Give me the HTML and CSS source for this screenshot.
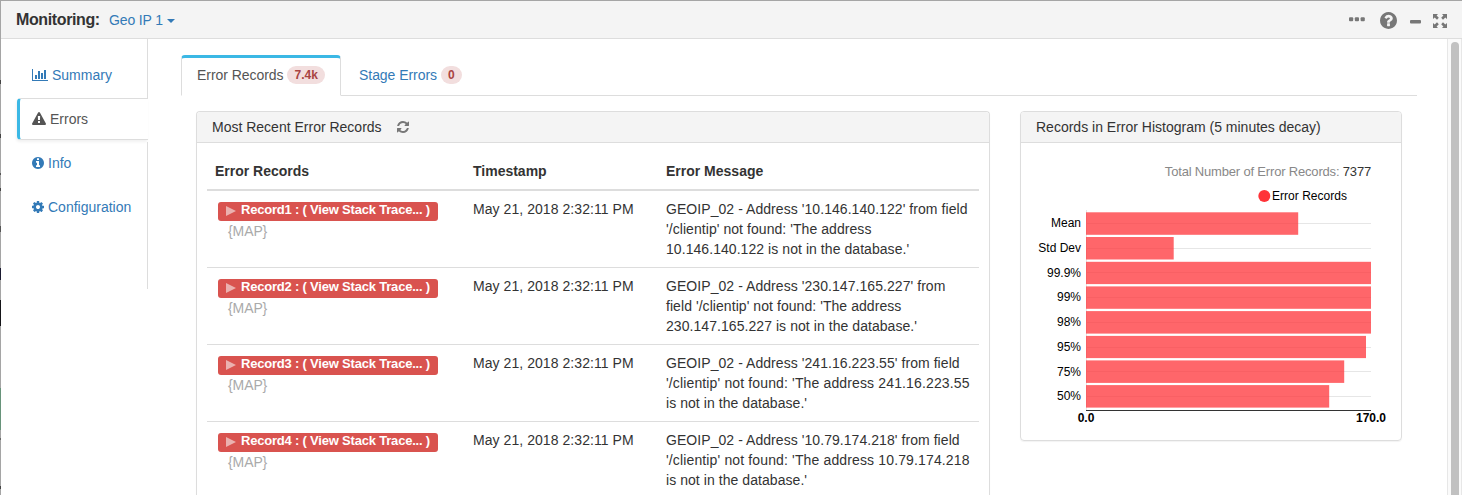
FILE: index.html
```html
<!DOCTYPE html>
<html lang="en">
<head>
<meta charset="utf-8">
<title>Monitoring</title>
<link rel="stylesheet" href="styles.css">
</head>
<body>
<div class="window">
  <header class="topbar">
    <span class="topbar-title">Monitoring:</span>
    <a class="pipeline">Geo IP 1</a><span class="caret"></span>
    <div class="tools">
      <svg class="t-dots" width="16" height="5" viewBox="0 0 16 5"><rect x="0" y="0.3" width="4.2" height="4" rx="1"/><rect x="5.8" y="0.3" width="4.2" height="4" rx="1"/><rect x="11.6" y="0.3" width="4.2" height="4" rx="1"/></svg>
      <svg class="t-help" width="17" height="17" viewBox="128 128 1536 1536"><path d="M1024 1376v-192q0-14-9-23t-23-9h-192q-14 0-23 9t-9 23v192q0 14 9 23t23 9h192q14 0 23-9t9-23zm256-672q0-88-55.500-163t-138.500-116-170-41q-243 0-371 213-15 24 8 42l132 100q7 6 19 6 16 0 25-12 53-68 86-92 34-24 86-24 48 0 85.500 26t37.500 59q0 38-20 61t-68 45q-63 28-115.500 86.500t-52.500 125.500v36q0 14 9 23t23 9h192q14 0 23-9t9-23q0-19 21.500-49.500t54.500-49.500q32-18 49-28.500t46-35 44.500-48 28-60.500 12.500-81zm384 192q0 209-103 385.500t-279.500 279.500-385.500 103-385.500-103-279.500-279.500-103-385.500 103-385.500 279.500-279.500 385.500-103 385.500 103 279.500 279.500 103 385.500z"/></svg>
      <svg class="t-min" width="11" height="4" viewBox="0 0 11 4"><rect width="11" height="3.600" rx="1"/></svg>
      <svg class="t-full" width="14" height="14" viewBox="0 0 14 14"><path id="arr" d="M0 0h5L3.600 1.500 5.800 3.800 4 5.700 1.700 3.500 0 5z"/><use href="#arr" transform="translate(14 0) scale(-1 1)"/><use href="#arr" transform="translate(0 14) scale(1 -1)"/><use href="#arr" transform="translate(14 14) scale(-1 -1)"/></svg>
    </div>
  </header>
  <div class="body">
    <nav class="side">
      <a class="side-item"><svg width="16" height="14" viewBox="0 0 2048 1792"><path d="M640 896v512H384V896h256zm384-512v1024H768V384h256zM2048 1536v128H0V128h128v1408h1920zM1408 640v768h-256V640h256zm384-384v1152h-256V256h256z"/></svg>Summary</a>
      <a class="side-item active"><svg width="14" height="14" viewBox="0 0 1792 1792"><path d="M1024 1375v-190q0-14-9.500-23.500t-22.500-9.500h-192q-13 0-22.500 9.500t-9.500 23.500v190q0 14 9.500 23.500t22.500 9.500h192q13 0 22.500-9.500t9.500-23.500zm-2-374l18-459q0-12-10-19-13-11-24-11h-220q-11 0-24 11-10 7-10 21l17 457q0 10 10 16.500t24 6.500h185q14 0 23.500-6.500t10.500-16.500zm-14-934l768 1408q35 63-2 126-17 29-46.500 46t-63.500 17h-1536q-34 0-63.500-17t-46.500-46q-37-63-2-126l768-1408q17-31 47-49t65-18 65 18 47 49z"/></svg>Errors</a>
      <a class="side-item"><svg width="12" height="14" viewBox="128 0 1536 1792"><path d="M1152 1376v-160q0-14-9-23t-23-9h-96v-512q0-14-9-23t-23-9h-320q-14 0-23 9t-9 23v160q0 14 9 23t23 9h96v320h-96q-14 0-23 9t-9 23v160q0 14 9 23t23 9h448q14 0 23-9t9-23zm-128-896v-160q0-14-9-23t-23-9h-192q-14 0-23 9t-9 23v160q0 14 9 23t23 9h192q14 0 23-9t9-23zm640 416q0 209-103 385.500t-279.500 279.500-385.500 103-385.500-103-279.500-279.500-103-385.500 103-385.500 279.500-279.500 385.500-103 385.500 103 279.500 279.500 103 385.500z"/></svg>Info</a>
      <a class="side-item"><svg width="12" height="14" viewBox="128 0 1536 1792"><path d="M1152 896q0-106-75-181t-181-75-181 75-75 181 75 181 181 75 181-75 75-181zm512-109v222q0 12-8 23t-20 13l-185 28q-19 54-39 91 35 50 107 138 10 12 10 25t-9 23q-27 37-99 108t-94 71q-12 0-26-9l-138-108q-44 23-91 38-16 136-29 186-7 28-36 28h-222q-14 0-24.500-8.500t-11.500-21.500l-28-184q-49-16-90-37l-141 107q-10 9-25 9-14 0-25-11-126-114-165-168-7-10-7-23 0-12 8-23 15-21 51-66.500t54-70.500q-27-50-41-99l-183-27q-13-2-21-12.500t-8-23.500v-222q0-12 8-23t19-13l186-28q14-46 39-92-40-57-107-138-10-12-10-24 0-10 9-23 26-36 98.500-107.500t94.500-71.500q13 0 26 10l138 107q44-23 91-38 16-136 29-186 7-28 36-28h222q14 0 24.500 8.500t11.500 21.500l28 184q49 16 90 37l142-107q9-9 24-9 13 0 25 10 129 119 165 170 7 8 7 22 0 12-8 23-15 21-51 66.500t-54 70.500q26 50 41 98l183 28q13 2 21 12.500t8 23.500z"/></svg>Configuration</a>
      <div class="side-rest"></div>
    </nav>
    <main class="main">
      <div class="tabs">
        <a class="tab active">Error Records <span class="badge">7.4k</span></a>
        <a class="tab">Stage Errors <span class="badge">0</span></a>
      </div>
      <div class="panels">
        <section class="panel records">
          <h2 class="panel-head">Most Recent Error Records<svg class="refresh" width="12" height="14" viewBox="128 0 1536 1792"><path d="M1639 1056q0 5-1 7-64 268-268 434.500t-478 166.500q-146 0-282.500-55t-243.500-157l-129 129q-19 19-45 19t-45-19-19-45v-448q0-26 19-45t45-19h448q26 0 45 19t19 45-19 45l-137 137q71 66 161 102t187 36q134 0 250-65t186-179q11-17 53-117 8-23 30-23h192q13 0 22.500 9.500t9.500 22.500zm25-800v448q0 26-19 45t-45 19h-448q-26 0-45-19t-19-45 19-45l138-138q-148-137-349-137-134 0-250 65t-186 179q-11 17-53 117-8 23-30 23h-199q-13 0-22.500-9.500t-9.500-22.500v-7q65-268 270-434.500t480-166.500q146 0 284 55.500t245 156.500l130-129q19-19 45-19t45 19 19 45z"/></svg></h2>
          <table class="table">
            <thead><tr><th class="c1">Error Records</th><th class="c2">Timestamp</th><th>Error Message</th></tr></thead>
            <tbody>
              <tr><td><span class="label"><i class="play"></i><span>Record1 : ( View Stack Trace... )</span></span><div class="map">{MAP}</div></td><td>May 21, 2018 2:32:11 PM</td><td>GEOIP_02 - Address '10.146.140.122' from field<br>'/clientip' not found: 'The address<br>10.146.140.122 is not in the database.'</td></tr>
              <tr><td><span class="label"><i class="play"></i><span>Record2 : ( View Stack Trace... )</span></span><div class="map">{MAP}</div></td><td>May 21, 2018 2:32:11 PM</td><td>GEOIP_02 - Address '230.147.165.227' from<br>field '/clientip' not found: 'The address<br>230.147.165.227 is not in the database.'</td></tr>
              <tr><td><span class="label"><i class="play"></i><span>Record3 : ( View Stack Trace... )</span></span><div class="map">{MAP}</div></td><td>May 21, 2018 2:32:11 PM</td><td>GEOIP_02 - Address '241.16.223.55' from field<br><span class="loose">'/clientip' not found: 'The address 241.16.223.55</span><br>is not in the database.'</td></tr>
              <tr><td><span class="label"><i class="play"></i><span>Record4 : ( View Stack Trace... )</span></span><div class="map">{MAP}</div></td><td>May 21, 2018 2:32:11 PM</td><td>GEOIP_02 - Address '10.79.174.218' from field<br><span class="loose">'/clientip' not found: 'The address 10.79.174.218</span><br>is not in the database.'</td></tr>
            </tbody>
          </table>
        </section>
        <section class="panel histogram">
          <h2 class="panel-head">Records in Error Histogram (5 minutes decay)</h2>
          <div class="total">Total Number of Error Records: <b>7377</b></div>
          <svg class="chart" width="380" height="255" viewBox="0 0 380 255">
            <circle cx="243.300" cy="13" r="6" fill="#ff3338"/>
            <text x="251" y="17" textLength="75">Error Records</text>
            <g transform="translate(0 -1)">
              <path class="grid" d="M65.500 28V228M65 41.500H350M65 66.500H350M65 90.500H350M65 115.500H350M65 140.500H350M65 165.500H350M65 189.500H350M65 214.500H350"/>
              <g class="bars">
                <rect x="65" y="30.300" width="212.200" height="22.500"/>
                <rect x="65" y="55" width="87.700" height="22.500"/>
                <rect x="65" y="79.800" width="285" height="22.300"/>
                <rect x="65" y="104.400" width="285" height="22.400"/>
                <rect x="65" y="129.100" width="285" height="22.500"/>
                <rect x="65" y="153.900" width="280" height="22.200"/>
                <rect x="65" y="178.400" width="258.200" height="22.500"/>
                <rect x="65" y="203.100" width="243.200" height="22.500"/>
              </g>
              <path class="axis" d="M65 228.500H350"/>
              <g class="names">
                <text x="60" y="45">Mean</text><text x="60" y="70">Std Dev</text><text x="60" y="95">99.9%</text><text x="60" y="119">99%</text><text x="60" y="144">98%</text><text x="60" y="169">95%</text><text x="60" y="194">75%</text><text x="60" y="218">50%</text>
              </g>
              <g class="ticks"><text x="65" y="240">0.0</text><text x="350" y="240">170.0</text></g>
            </g>
          </svg>
        </section>
      </div>
    </main>
    <div class="scroll"><div class="thumb"></div></div>
  </div>
</div>
</body>
</html>
```
FILE: styles.css
```css
* { box-sizing: border-box; }
body {
  margin: 0;
  height: 495px;
  overflow: hidden;
  background: linear-gradient(#a5a5a5 0 80px, #444 80px 84px, #a5a5a5 84px 134px, #444 134px 138px, #a5a5a5 138px 173px, #555 173px 175px, #a5a5a5 175px 188px, #444 188px 191px, #a5a5a5 191px 226px, #555 226px 232px, #a5a5a5 232px 268px, #1a1a30 268px 280px, #a5a5a5 280px 300px, #151518 300px 326px, #a5a5a5 326px 388px, #67937a 388px 430px, #a5a5a5 430px 438px, #666 438px 440px, #a5a5a5 440px 486px, #444 486px 489px, #a5a5a5 489px);
  color: #333;
  font: 14px/20px "Liberation Sans", Arial, sans-serif;
}
.window {
  display: flex;
  flex-direction: column;
  height: 495px;
  margin-left: 1px;
  border-top: 1px solid #a5a5a5;
  background: #fff;
}
.topbar {
  display: flex;
  flex: 0 0 38px;
  align-items: center;
  padding: 1px 15px 0 15px;
  border-bottom: 1px solid #ddd;
  background: #f4f4f4;
  white-space: nowrap;
}
.topbar-title { width: 93px; font-size: 16px; font-weight: bold; letter-spacing: -0.38px; }
.pipeline { color: #337ab7; letter-spacing: -0.15px; }
.caret { margin: 2px 0 0 4px; border: 4px solid transparent; border-top-color: #337ab7; border-bottom: 0; }
.tools { display: flex; align-items: center; margin-left: auto; fill: #777; }
.t-dots { margin: -1px 15px 0 0; }
.t-help { margin-right: 13px; }
.t-min { margin: 3px 12px 0 0; }
.t-full { margin-top: 2px; }
.body { display: flex; flex: 1; min-height: 0; }
.side {
  display: flex;
  flex-direction: column;
  flex: 0 0 147px;
  height: 250px;
  padding-left: 15px;
}
.side::before { content: ""; flex: 0 0 15px; border-right: 1px solid #ddd; }
.side-item {
  display: flex;
  align-items: center;
  flex: 0 0 44px;
  gap: 4px;
  padding: 0 0 2px 16px;
  border-right: 1px solid #ddd;
  color: #337ab7;
  fill: #337ab7;
}
.side-item.active {
  flex-basis: 42px;
  margin: 0 0 2px 1px;
  padding: 0 0 0 12px;
  border: 1px solid #ddd;
  border-right: 0;
  border-left: 3px solid #3bb8e5;
  border-radius: 4px 0 0 4px;
  box-shadow: -1px 2px 3px rgba(0, 0, 0, .06);
  color: #555;
  fill: #555;
}
.side-rest { flex: 1; border-right: 1px solid #ddd; }
.main { flex: 1; min-width: 0; padding: 16px 30px 0 33px; overflow: hidden; }
.tabs { display: flex; height: 41px; border-bottom: 1px solid #ddd; }
.tab {
  display: flex;
  align-items: center;
  gap: 4px;
  height: 41px;
  margin-right: 2px;
  padding: 0 15px 3px;
  border: 1px solid transparent;
  border-top-width: 3px;
  color: #337ab7;
  white-space: nowrap;
  letter-spacing: -0.05px;
}
.tab.active {
  width: 160px;
  border-color: #3bb8e5 #ddd #fff;
  border-radius: 4px 4px 0 0;
  background: #fff;
  color: #555;
}
.badge {
  height: 18px;
  padding: 3px 7px;
  border-radius: 9px;
  background: #f2dede;
  color: #a94442;
  font-size: 12px;
  font-weight: bold;
  line-height: 12px;
  letter-spacing: 0;
}
.panels { display: flex; align-items: flex-start; gap: 30px; padding: 15px 15px 0; }
.panel { border: 1px solid #ddd; border-radius: 4px; box-shadow: 0 1px 1px rgba(0, 0, 0, .05); }
.records { width: 794px; height: 384px; border-bottom: 0; border-radius: 4px 4px 0 0; overflow: hidden; }
.histogram { width: 382px; height: 330px; }
.panel-head {
  display: flex;
  align-items: center;
  height: 31px;
  margin: 0;
  padding: 0 15px;
  border-bottom: 1px solid #ddd;
  border-radius: 3px 3px 0 0;
  background: #f4f4f4;
  font-size: 14px;
  font-weight: normal;
}
.refresh { margin-left: 15px; fill: #777; }
.table { width: 772px; margin: 10px 0 0 10px; border-collapse: separate; border-spacing: 0; table-layout: fixed; white-space: nowrap; }
.c1 { width: 258px; }
.c2 { width: 193px; }
th { height: 38px; padding: 8px; border-bottom: 2px solid #ddd; text-align: left; }
td { height: 77px; padding: 8px; border-bottom: 1px solid #ddd; vertical-align: top; letter-spacing: 0.06px; }
.loose { letter-spacing: 0.14px; }
tbody tr:last-child td { height: 76px; border-bottom: 0; }
.label {
  display: flex;
  width: 220px;
  height: 19px;
  margin: 3px 0 0 3px;
  padding-left: 8px;
  border-radius: 3px;
  background: #d9534f;
  color: #fff;
  font-size: 13px;
  font-weight: bold;
  line-height: 16px;
  letter-spacing: -0.2px;
}
.play { margin: 4px 5px 0 0; border: 5px solid transparent; border-left: 10px solid #ebb1af; border-right: 0; height: 10px; }
.map { padding-left: 13px; color: #aaa; letter-spacing: -0.1px; }
.total { height: 40px; padding: 19px 30px 0 0; color: #888; font-size: 13px; text-align: right; letter-spacing: -0.18px; }
.total b { color: #333; font-weight: normal; }
.chart { display: block; font-size: 12px; }
.grid { fill: none; stroke: #e6e6e6; }
.bars { fill: #ff3338; fill-opacity: .75; }
.axis { stroke: #333; }
.names { text-anchor: end; }
.ticks { font-weight: bold; text-anchor: middle; }
.scroll { flex: 0 0 15px; padding: 3px 2px 0 3px; border: 1px solid #e7e7e7; border-width: 0 1px; background: #fafafa; }
.thumb { width: 8px; height: 453px; border-radius: 4px 4px 0 0; background: #c1c1c1; }
```
